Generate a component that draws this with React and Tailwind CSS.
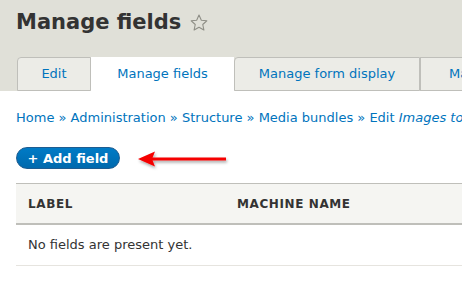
import React from "react";

const tabs = [
  { label: "Edit", width: "w-[74px]" },
  { label: "Manage fields", width: "w-[143px]", active: true },
  { label: "Manage form display", width: "w-[186px]" },
  { label: "Manage display", width: "w-[160px]" },
];

const Star = () => (
  <svg width="20" height="20" viewBox="0 0 24 24" className="ml-[8px] mt-[2px]">
    <path
      d="M12 2.5l2.8 6.1 6.6.7-4.9 4.5 1.4 6.6L12 17.1l-5.9 3.3 1.4-6.6-4.9-4.5 6.6-.7z"
      fill="none"
      stroke="#8e8e86"
      strokeWidth="1.3"
      strokeLinejoin="round"
    />
  </svg>
);

const Arrow = () => (
  <svg width="100" height="24" viewBox="0 0 100 24" className="ml-[12px] mt-[2px]">
    <defs>
      <filter id="sh" x="-20%" y="-50%" width="140%" height="200%">
        <feDropShadow dx="1" dy="2" stdDeviation="1.5" floodColor="#000" floodOpacity="0.35" />
      </filter>
    </defs>
    <g filter="url(#sh)">
      <path d="M6 12 L23 4.5 L20 12 L23 19.5 Z" fill="#f50000" />
      <rect x="19" y="10.5" width="75" height="3" fill="#f50000" />
    </g>
  </svg>
);

export default function App() {
  return (
    <div className="w-[462px] h-[292px] overflow-hidden bg-white font-['DejaVu_Sans',sans-serif] text-[#333]">
      <div className="bg-[#e0e0d8] pt-[7px]">
        <div className="flex items-center pl-[16px] h-[30px]">
          <h1 className="text-[21px] font-bold leading-none text-[#333]">Manage fields</h1>
          <Star />
        </div>
        <div className="flex pl-[17px] mt-[20px] whitespace-nowrap overflow-hidden">
          {tabs.map((t) => (
            <div
              key={t.label}
              className={
                "shrink-0 h-[34px] flex items-center justify-center text-[13px] text-[#0074bd] " +
                t.width +
                (t.active
                  ? " bg-white"
                  : " bg-[#ecece7] border border-[#bfbfba] first:rounded-tl-[4px] [&:nth-child(3)]:rounded-tl-[4px]")
              }
            >
              {t.label}
            </div>
          ))}
        </div>
      </div>

      <div className="pl-[16px]">
        <div className="mt-[17px] text-[13px] text-[#0074bd] whitespace-nowrap leading-[20px] overflow-hidden">
          Home » Administration » Structure » Media bundles » Edit <em>Images to go</em>
        </div>
        <div className="flex items-center mt-[17px]">
          <button className="h-[22px] w-[104px] rounded-full bg-gradient-to-b from-[#007bc6] to-[#0069ad] border border-[#1e5c90] text-white text-[13px] font-bold flex items-center justify-center leading-none">
            + Add field
          </button>
          <Arrow />
        </div>

        <div className="mt-[12px] w-[500px]">
          <div className="flex h-[42px] items-center bg-[#f5f5f2] border-t border-b-2 border-[#bfbfba] text-[12px] font-bold uppercase tracking-[0.6px] text-[#333]">
            <div className="pl-[12px] w-[221px]">Label</div>
            <div>Machine name</div>
          </div>
          <div className="h-[41px] flex items-center pl-[12px] border-b border-[#e6e4df] text-[13px]">
            No fields are present yet.
          </div>
        </div>
      </div>
    </div>
  );
}
